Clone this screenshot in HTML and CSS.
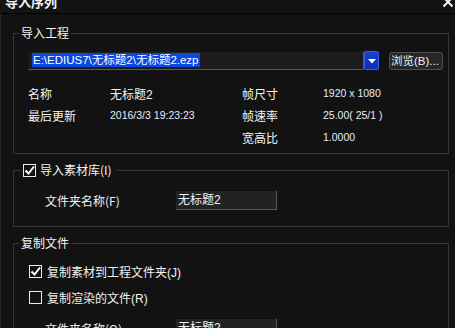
FILE: index.html
```html
<!DOCTYPE html>
<html lang="zh-CN">
<head>
<meta charset="utf-8">
<title>导入序列</title>
<link rel="stylesheet" href="styles.css">
</head>
<body>
<div class="dialog">
  <div class="titlebar">
    <span class="title">导入序列</span>
    <svg class="close" width="12" height="12" viewBox="0 0 12 12"><path d="M1.5 1.5 L10.5 10.5 M10.5 1.5 L1.5 10.5" stroke="#f4f4f4" stroke-width="2" fill="none"/></svg>
  </div>
  <div class="content">
    <fieldset class="group">
      <legend class="legend">导入工程</legend>
      <div class="gbody gbody-project">
        <div class="path-row">
          <div class="path-input"><span class="sel">E:\EDIUS7\无标题2\无标题2.ezp</span></div>
          <div class="drop-btn"><svg width="8" height="5" viewBox="0 0 8 5"><path d="M0 0 H8 L4 4.5 Z" fill="#fff"/></svg></div>
          <div class="browse-btn">浏览(B)...</div>
        </div>
        <div class="info">
          <span class="lbl">名称</span><span class="val cjk">无标题2</span><span class="lbl">帧尺寸</span><span class="val">1920 x 1080</span>
          <span class="lbl">最后更新</span><span class="val">2016/3/3 19:23:23</span><span class="lbl">帧速率</span><span class="val">25.00( 25/1 )</span>
          <span></span><span></span><span class="lbl">宽高比</span><span class="val">1.0000</span>
        </div>
      </div>
    </fieldset>

    <fieldset class="group group-bin">
      <legend class="legend legend-check"><span class="cb"><svg width="11" height="11" viewBox="0 0 11 11"><path d="M1.5 5.5 L4.5 8.5 L10 1.5" stroke="#fff" stroke-width="2" fill="none"/></svg></span><span>导入素材库(I)</span></legend>
      <div class="gbody gbody-bin">
        <div class="field-row">
          <span class="field-lbl">文件夹名称(F)</span>
          <div class="field-input">无标题2</div>
        </div>
      </div>
    </fieldset>

    <fieldset class="group group-copy">
      <legend class="legend">复制文件</legend>
      <div class="gbody gbody-copy">
        <div class="check-row"><span class="cb"><svg width="11" height="11" viewBox="0 0 11 11"><path d="M1.5 5.5 L4.5 8.5 L10 1.5" stroke="#fff" stroke-width="2" fill="none"/></svg></span><span>复制素材到工程文件夹(J)</span></div>
        <div class="check-row"><span class="cb"></span><span>复制渲染的文件(R)</span></div>
        <div class="field-row field-row-copy">
          <span class="field-lbl">文件夹名称(O)</span>
          <div class="field-input">无标题2</div>
        </div>
      </div>
    </fieldset>
  </div>
</div>
</body>
</html>
```
FILE: styles.css
```css
* { box-sizing: border-box; }
html, body { margin: 0; padding: 0; background: #121212; }
body {
  width: 455px;
  height: 328px;
  overflow: hidden;
  font-family: "Liberation Sans", "Noto Sans CJK SC", sans-serif;
  font-size: 12px;
  color: #f2f2f2;
}
.dialog { width: 455px; height: 328px; overflow: hidden; }

.titlebar {
  height: 14px;
  border-bottom: 1px solid #000;
  display: flex;
  justify-content: space-between;
  align-items: flex-start;
  overflow: hidden;
  padding: 0 1px 0 5px;
  background: #131313;
}
.title {
  font-family: "Noto Sans CJK SC", sans-serif;
  font-weight: bold;
  font-size: 13px;
  line-height: 13px;
  margin-top: -5px;
  color: #f4f4f4;
}
.close { margin-top: -4px; }

.content {
  padding: 12px 6px 0 12px;
  border-left: 1px solid #2a2a2a;
}

.group {
  margin: 0;
  padding: 0;
  border: 1px solid #353535;
  min-width: 0;
}
.legend {
  margin-left: 5px;
  padding: 0 2px;
  height: 14px;
  line-height: 14px;
  font-family: "Noto Sans CJK SC", sans-serif;
  font-size: 12px;
  color: #f4f4f4;
}
.legend-check {
  margin-left: 7px;
  padding: 0 5px 0 2px;
  height: 16px;
  line-height: 16px;
  display: flex;
  align-items: center;
  gap: 4px;
}
.group-bin { margin-top: 8px; }
.group-copy { margin-top: 9px; }

.gbody-project { padding: 11px 0 5px 14px; }
.gbody-bin { padding: 12px 0 16px 31px; }
.gbody-copy { padding: 8px 0 0 15px; }

.path-row {
  display: flex;
  align-items: center;
  height: 19px;
  margin-bottom: 12px;
}
.path-input {
  width: 336px;
  height: 19px;
  background: #1d1d1d;
  border: 1px solid #161616;
  border-right-color: #5a5a5a;
  border-bottom-color: #5a5a5a;
  padding: 1px 0 0 3px;
  overflow: hidden;
  white-space: nowrap;
}
.sel {
  display: inline-block;
  background: #0a48e2;
  color: #fff;
  font-size: 11.5px;
  line-height: 14px;
  height: 14px;
  padding: 0 1px;
}
.drop-btn {
  width: 15px;
  height: 19px;
  margin-left: 0;
  background: linear-gradient(#1840d0, #0a2fb4);
  border: 1px solid #3a5ae0;
  border-radius: 2px;
  display: flex;
  align-items: center;
  justify-content: center;
  padding-top: 2px;
}
.browse-btn {
  margin-left: 10px;
  width: 54px;
  height: 18px;
  background: #262626;
  border: 1px solid #505050;
  border-radius: 3px;
  font-size: 11.5px;
  line-height: 16px;
  padding-left: 1px;
  white-space: nowrap;
  color: #f2f2f2;
}

.info {
  display: grid;
  grid-template-columns: 82px 132px 81px 1fr;
  grid-auto-rows: 22px;
  align-items: center;
}
.lbl {
  font-family: "Noto Sans CJK SC", sans-serif;
  font-size: 12px;
  color: #f4f4f4;
}
.val {
  font-family: "Liberation Sans", sans-serif;
  font-size: 10.5px;
  color: #e4ecff;
}
.val.cjk {
  font-family: "Liberation Sans", "Noto Sans CJK SC", sans-serif;
  font-size: 12px;
  color: #f4f4f4;
}

.field-row {
  display: flex;
  align-items: center;
  height: 20px;
}
.field-lbl {
  width: 130px;
  font-family: "Noto Sans CJK SC", sans-serif;
}
.field-input {
  width: 102px;
  height: 20px;
  background: #222;
  border: 1px solid #101010;
  border-right-color: #5a5a5a;
  border-bottom-color: #5a5a5a;
  padding-left: 2px;
  line-height: 18px;
  font-family: "Liberation Sans", "Noto Sans CJK SC", sans-serif;
  color: #f4f4f4;
}
.field-row-copy { margin-top: 8px; margin-left: 16px; }

.check-row {
  display: flex;
  align-items: center;
  gap: 5px;
  height: 26px;
  font-family: "Liberation Sans", "Noto Sans CJK SC", sans-serif;
}
.cb {
  width: 13px;
  height: 13px;
  border: 1px solid #ececec;
  display: inline-flex;
  align-items: center;
  justify-content: center;
  flex: none;
}
```
